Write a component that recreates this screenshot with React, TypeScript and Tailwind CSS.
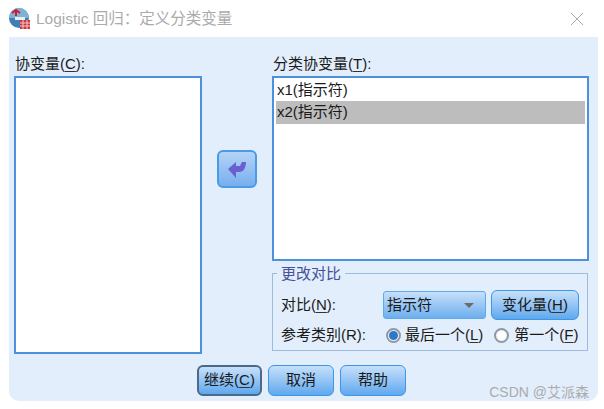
import React from 'react';

const FONT = '"Liberation Sans", "Noto Sans CJK SC", sans-serif';

const BTN = 'flex items-center justify-center rounded-[6px] border border-[#3f96e6] bg-gradient-to-b from-[#c6e0fa] to-[#5ea8ee] text-[15px] text-[#1a1a1a]';

const Key = ({ children }: { children: string }) => (
  <span className="underline underline-offset-2 decoration-[#333]">{children}</span>
);

const Radio = ({ checked }: { checked?: boolean }) => (
  <span className="flex h-[15px] w-[15px] shrink-0 items-center justify-center rounded-full border-2 border-[#8f99a6] bg-[#eef2f6]">
    <span className={`h-[9px] w-[9px] rounded-full ${checked ? 'bg-[#2f78c8]' : 'bg-white'}`} />
  </span>
);

const AppIcon = () => (
  <svg width="21" height="21" viewBox="0 0 21 21">
    <circle cx="10" cy="10" r="10" fill="#3f7fb5" />
    <path d="M0 10a10 10 0 0 1 20 0z" fill="#7fb0d6" />
    <path d="M7 3v5M3 5l4-3 4 3" fill="none" stroke="#c8202c" strokeWidth="2" />
    <rect x="6" y="9" width="10" height="3" fill="#e6eef5" />
    <rect x="11" y="12" width="10" height="9" fill="#c9383f" />
    <path d="M11 15h10M11 18h10M14 12v9M18 12v9" stroke="#f3c6c8" strokeWidth="1" />
  </svg>
);

export default function App() {
  return (
    <div className="h-[409px] w-[604px] overflow-hidden bg-white" style={{ fontFamily: FONT }}>
      <div className="flex h-[37px] items-center pl-[9px] pr-[20px]">
        <AppIcon />
        <span className="ml-[6px] text-[15.5px] text-[#ababab]">Logistic 回归：定义分类变量</span>
        <svg className="ml-auto" width="14" height="14" viewBox="0 0 14 14">
          <path d="M1 1l12 12M13 1L1 13" stroke="#a8a8a8" strokeWidth="1" fill="none" />
        </svg>
      </div>

      <div className="relative ml-[9px] h-[364px] w-[589px] rounded-b-[10px] bg-[#e2eefb]">
        <div className="flex pl-[5px] pt-[17px]">
          <div className="w-[188px]">
            <div className="h-[22px] pl-[1px] text-[15px] leading-[20px] text-[#1a1a1a]">
              协变量(<Key>C</Key>):
            </div>
            <div className="h-[278px] border-2 border-[#4d90dc] bg-white" />
          </div>

          <div className="ml-[15px] mt-[96px]">
            <div className="flex h-[38px] w-[40px] items-center justify-center rounded-[6px] border-2 border-[#4a9ae6] bg-gradient-to-b from-[#b4d4f7] to-[#77aeee]">
              <svg width="18" height="17" viewBox="0 0 18 17">
                <path d="M0 8L8 1v4h4l2-4h4c0 5-2 10-7 10H8v6z" fill="#6a5fcf" />
              </svg>
            </div>
          </div>

          <div className="ml-[15px] w-[317px]">
            <div className="h-[22px] pl-[1px] text-[15px] leading-[20px] text-[#1a1a1a]">
              分类协变量(<Key>T</Key>):
            </div>
            <div className="h-[185px] border-2 border-[#4d90dc] bg-white px-[2px] pt-[1px] text-[15px] text-[#1a1a1a]">
              <div className="flex h-[23px] items-center pl-[1px]">x1(指示符)</div>
              <div className="-mt-px flex h-[23px] items-center bg-[#bdbdbd] pl-[1px]">x2(指示符)</div>
            </div>

            <div className="relative mt-[12px] h-[78px] w-[316px] border border-[#9dbbdc] px-[8px] pt-[16px]">
              <span className="absolute left-[4px] top-[-7px] bg-[#e2eefb] px-[4px] text-[15px] leading-[14px] text-[#45509a]">更改对比</span>
              <div className="flex items-center">
                <span className="w-[103px] text-[15px] text-[#1a1a1a]">对比(<Key>N</Key>):</span>
                <div className="flex h-[28px] w-[104px] items-center justify-between rounded-[3px] border border-[#5ea8ee] bg-gradient-to-b from-[#c6e0fa] to-[#6caeee] pl-[3px] pr-[11px] text-[15px] text-[#1a1a1a]">
                  指示符
                  <span className="h-0 w-0 border-x-[5px] border-t-[5px] border-x-transparent border-t-[#6b6b6b]" />
                </div>
                <div className={`ml-[5px] h-[30px] w-[89px] ${BTN}`}>变化量(<Key>H</Key>)</div>
              </div>
              <div className="mt-[4px] flex items-center text-[15px] text-[#1a1a1a]">
                <span className="w-[105px]">参考类别(R):</span>
                <Radio checked />
                <span className="ml-[4px] whitespace-nowrap">最后一个(<Key>L</Key>)</span>
                <span className="ml-[11px]"><Radio /></span>
                <span className="ml-[5px] whitespace-nowrap">第一个(<Key>F</Key>)</span>
              </div>
            </div>
          </div>
        </div>

        <div className="absolute left-[188px] top-[328px] flex gap-[6px]">
          <div className={`h-[31px] w-[65px] border-2 border-[#4a6a88] ${BTN}`}>继续(<Key>C</Key>)</div>
          <div className={`h-[31px] w-[66px] ${BTN}`}>取消</div>
          <div className={`h-[31px] w-[66px] ${BTN}`}>帮助</div>
        </div>

        <span className="absolute right-[9px] top-[348px] text-[14px] leading-[15px] text-[#ababab]">CSDN @艾派森</span>
      </div>
    </div>
  );
}
